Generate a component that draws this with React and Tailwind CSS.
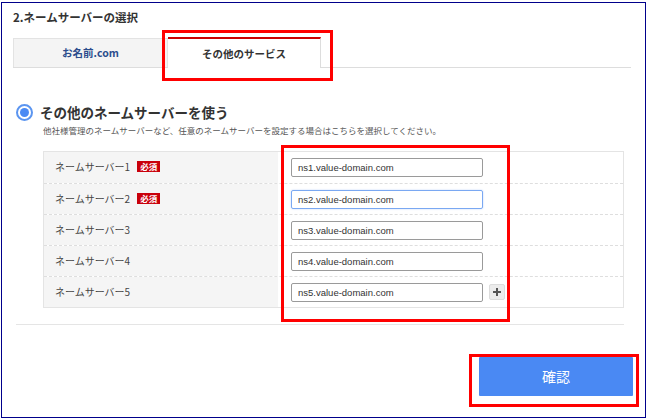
const servers = [
  { label: 'ネームサーバー1', required: true, value: 'ns1.value-domain.com' },
  { label: 'ネームサーバー2', required: true, value: 'ns2.value-domain.com', focused: true },
  { label: 'ネームサーバー3', value: 'ns3.value-domain.com' },
  { label: 'ネームサーバー4', value: 'ns4.value-domain.com' },
  { label: 'ネームサーバー5', value: 'ns5.value-domain.com', addButton: true },
];

const ServerRow = ({ server, first }) => (
  <div className={`flex h-[31px] ${first ? '' : 'border-t border-dashed border-[#dedede]'}`}>
    <div className="w-[234px] bg-[#f5f5f5] flex items-center pl-[11px] pb-[2px] gap-[7px]">
      <span className="text-[10px] text-[#444]">{server.label}</span>
      {server.required && (
        <span className="bg-[#c9000b] text-white text-[8.5px] leading-[11px] h-[11px] px-[3px] font-bold">
          必須
        </span>
      )}
    </div>
    <div className="flex-1 flex items-center pl-[13px]">
      <input
        readOnly
        value={server.value}
        className={`w-[192px] h-[19px] rounded-[2px] px-[6px] text-[9.5px] text-[#333] font-['Liberation_Sans',sans-serif] outline-none border ${
          server.focused ? 'border-[#7aa8f2] shadow-[0_0_2px_#b9d2fb]' : 'border-[#9a9a9a]'
        }`}
      />
      {server.addButton && (
        <button className="ml-[6px] w-[16px] h-[16px] rounded-[2px] bg-[#ececec] border border-[#dcdcdc] flex items-center justify-center">
          <svg width="10" height="10" viewBox="0 0 10 10">
            <path d="M5 1v8M1 5h8" stroke="#555" strokeWidth="2" />
          </svg>
        </button>
      )}
    </div>
  </div>
);

export default function App() {
  return (
    <div className="relative w-[650px] h-[420px] bg-white text-[#333] font-['Noto_Sans_CJK_JP',sans-serif]">
      <div className="ml-px mt-[2px] w-[645px] h-[416px] border border-[#00008b] flex flex-col">
        {/* section title */}
        <h2 className="ml-[11px] mt-[6px] text-[11.5px] leading-[16px] font-bold text-[#333]">
          2.ネームサーバーの選択
        </h2>

        {/* tabs */}
        <div className="ml-[11px] mt-[12px] w-[618px] h-[31px] flex border-b border-[#dddddd]">
          <div className="w-[155px] mt-px bg-[#f4f4f4] border border-b-0 border-[#e3e3e3] flex items-center justify-center text-[10.5px] font-bold text-[#2b4c8c]">
            お名前.com
          </div>
          <div className="w-[153px] h-[31px] bg-white border-t-2 border-t-[#cc0000] border-r border-r-[#dddddd] flex items-center justify-center text-[10.5px] font-bold text-[#333]">
            その他のサービス
          </div>
        </div>

        {/* radio option */}
        <div className="ml-[14px] mt-[34px] h-[20px] flex items-center gap-[7px]">
          <span className="w-[17px] h-[17px] rounded-full border-2 border-[#5b95f0] flex items-center justify-center">
            <span className="w-[9px] h-[9px] rounded-full bg-[#4a8af4]" />
          </span>
          <span className="text-[13.5px] font-bold text-[#333]">その他のネームサーバーを使う</span>
        </div>
        <p className="ml-[41px] mt-[2px] text-[8.5px] leading-[12px] text-[#555]">
          他社様管理のネームサーバーなど、任意のネームサーバーを設定する場合はこちらを選択してください。
        </p>

        {/* name server table */}
        <div className="ml-[41px] mt-[15px] w-[581px] border border-[#e4e4e4]">
          {servers.map((s, i) => (
            <ServerRow key={s.label} server={s} first={i === 0} />
          ))}
        </div>

        <div className="ml-[14px] mt-[16px] w-[608px] h-px bg-[#e5e5e5]" />

        {/* confirm button */}
        <div className="mt-[32px] flex justify-end pr-[12px]">
          <button className="w-[154px] h-[39px] bg-[#4a89f3] text-white text-[14px] rounded-[1px]">
            確認
          </button>
        </div>
      </div>

      {/* red annotation boxes */}
      <div className="absolute left-[162px] top-[28px] w-[171px] h-[51px] border-[3px] border-[#ff0000] pointer-events-none" />
      <div className="absolute left-[281px] top-[143px] w-[229px] h-[177px] border-[3px] border-[#ff0000] pointer-events-none" />
      <div className="absolute left-[469px] top-[352px] w-[170px] h-[53px] border-[3px] border-[#ff0000] pointer-events-none" />
    </div>
  );
}
